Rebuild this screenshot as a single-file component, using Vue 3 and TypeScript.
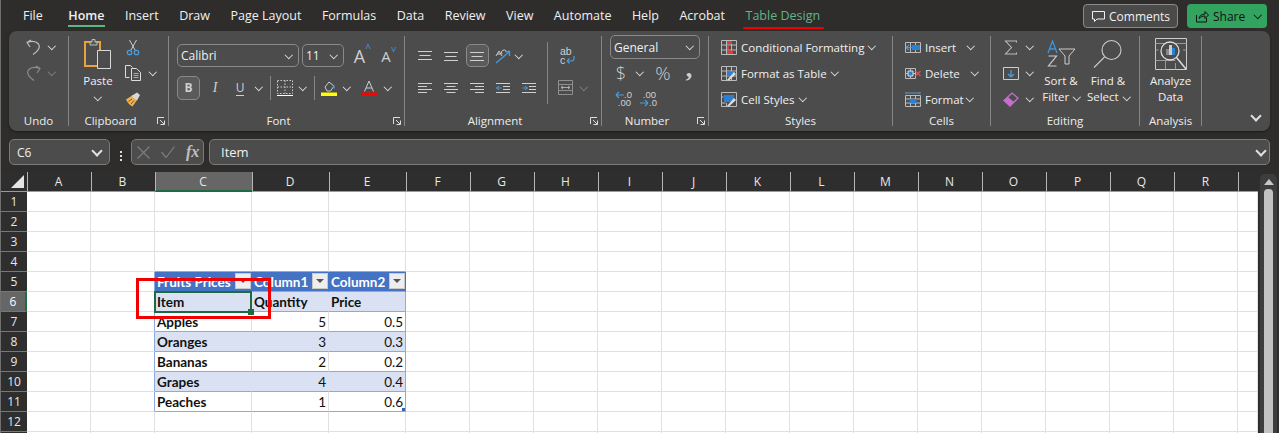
<script setup lang="ts">
interface Tab {
  name: string
  cls?: string
}

const tabs: Tab[] = [
  { name: 'File' },
  { name: 'Home', cls: 'home' },
  { name: 'Insert' },
  { name: 'Draw' },
  { name: 'Page Layout' },
  { name: 'Formulas' },
  { name: 'Data' },
  { name: 'Review' },
  { name: 'View' },
  { name: 'Automate' },
  { name: 'Help' },
  { name: 'Acrobat' },
  { name: 'Table Design', cls: 'design' }
]

const columns = ['A', 'B', 'C', 'D', 'E', 'F', 'G', 'H', 'I', 'J', 'K', 'L', 'M', 'N', 'O', 'P', 'Q', 'R', '']
const rows = [1, 2, 3, 4, 5, 6, 7, 8, 9, 10, 11, 12, 13]

const table: Record<number, (string | number)[]> = {
  5: ['Fruits Prices', 'Column1', 'Column2'],
  6: ['Item', 'Quantity', 'Price'],
  7: ['Apples', 5, 0.5],
  8: ['Oranges', 3, 0.3],
  9: ['Bananas', 2, 0.2],
  10: ['Grapes', 4, 0.4],
  11: ['Peaches', 1, 0.6]
}

const tableCols = ['C', 'D', 'E']

function value(r: number, col: string) {
  const i = tableCols.indexOf(col)
  if (i < 0 || !table[r]) return ''
  return table[r][i]
}

function cellClass(r: number, col: string) {
  const inTable = tableCols.includes(col)
  return {
    'in-table': inTable && r >= 5 && r <= 11,
    'table-top': inTable && r === 4,
    'table-left': col === 'B' && r >= 5 && r <= 11,
    'table-right': col === 'E' && r >= 5 && r <= 11,
    head: inTable && r === 5,
    band: inTable && (r === 6 || r === 8 || r === 10),
    bold: col === 'C' || r === 6,
    num: typeof value(r, col) === 'number'
  }
}
</script>

<template>
  <div class="excel">
    <div class="tabbar">
      <div class="tabs">
        <span v-for="t in tabs" :key="t.name" class="tab" :class="t.cls">{{ t.name }}</span>
      </div>
      <div class="top-actions">
        <div class="comments">
          <svg width="13" height="14" viewBox="0 0 13 14" fill="none" stroke="#eee" stroke-width="1"><path d="M.5 2.500h12v7.500H5L2.500 12.500V10h-2z"/></svg>
          Comments
        </div>
        <div class="share">
          <svg width="14" height="14" viewBox="0 0 14 14" fill="none" stroke="#111" stroke-width="1"><path d="M1.500 6v7h10V9M4 9.500c.5-3 3-4.500 6-4.500V2.500l3.500 3.500L10 9.500V7C7.500 7 5.500 7.800 4 9.500z"/></svg>
          <span>Share</span>
          <i class="chev dark"></i>
        </div>
      </div>
    </div>

    <div class="ribbon">
      <!-- Undo -->
      <div class="group g-undo">
        <div class="body col">
          <div class="tool">
            <svg width="15" height="17" viewBox="0 0 15 17" fill="none" stroke="#bdbdbd" stroke-width="1.200"><path d="M5 1 1 3.500 4 8M1 3.500C5 2 10 2 12.500 5 14.500 8 12 12 7 15.500"/></svg>
            <i class="chev small-gap"></i>
          </div>
          <div class="tool">
            <svg width="15" height="17" viewBox="0 0 15 17" fill="none" stroke="#8c8c8c" stroke-width="1.200"><path d="M10 1l4 2.500L11 8M14 3.500C10 2 5 2 2.500 5 .5 8 3 12 8 15.500"/></svg>
            <i class="chev small-gap off"></i>
          </div>
        </div>
        <div class="label">Undo</div>
      </div>
      <div class="sep"></div>

      <!-- Clipboard -->
      <div class="group g-clip">
        <div class="body row">
          <div class="large paste">
            <div class="large-icon">
              <svg width="28" height="31" viewBox="0 0 28 31"><path d="M1 4h15v24H1z" fill="none" stroke="#e8a33c" stroke-width="2"/><path d="M6 7V4h2V1.500h3V4h2v3z" fill="#555" stroke="#bbb"/><path d="M13.500 12.500h13v18h-13z" fill="#4c4c4c" stroke="#d8d8d8"/></svg>
            </div>
            <span>Paste</span>
            <i class="chev stacked"></i>
          </div>
          <div class="col clip-small">
            <div class="tool">
              <svg width="16" height="17" viewBox="0 0 16 17" fill="none"><path d="M4.500 1 10 11M11.500 1 6 11" stroke="#ccc"/><circle cx="4.500" cy="13.500" r="2.200" stroke="#4a9bdc" stroke-width="1.300"/><circle cx="11.500" cy="13.500" r="2.200" stroke="#4a9bdc" stroke-width="1.300"/></svg>
            </div>
            <div class="tool">
              <svg width="17" height="16" viewBox="0 0 17 16" fill="none" stroke="#ddd"><path d="M4.500 12.500H.5v-12h5l2 2"/><path d="M6.500 3.500h5l4 4v8h-9z" fill="#4c4c4c"/><path d="M8.500 8.500h5M8.500 10.500h5M8.500 12.500h5" stroke="#aaa"/></svg>
              <i class="chev small-gap"></i>
            </div>
            <div class="tool">
              <svg width="17" height="16" viewBox="0 0 17 16"><path d="M1 8.500 8 4l4 5-4.500 6.500C5.500 14.500 2.500 12 1 8.500z" fill="#f0b050"/><path d="M6.500 5 12 1.500l3 2.500-3 5.500z" fill="#d8d8d8"/><path d="M3.500 10.500 7 8M6 13l3-3.500" stroke="#7a5b2b"/></svg>
            </div>
          </div>
        </div>
        <div class="label launch-pad">Clipboard
          <svg class="launcher" width="8" height="8" viewBox="0 0 8 8" fill="none" stroke="#ddd"><path d="M.5 7V.5H7M3 3l4 4M3.500 7.500h4v-4"/></svg>
        </div>
      </div>
      <div class="sep"></div>

      <!-- Font -->
      <div class="group g-font">
        <div class="body stack">
          <div class="font-top">
            <div class="select"><span>Calibri</span><i class="chev"></i></div>
            <div class="select"><span>11</span><i class="chev"></i></div>
            <span class="grow-a big">A<sup class="caret">^</sup></span>
            <span class="grow-a">A<sup class="caret flip">^</sup></span>
          </div>
          <div class="font-bottom">
            <div class="bold-btn">B</div>
            <span class="italic">I</span>
            <span class="under">U</span>
            <i class="chev"></i>
            <div class="vline"></div>
            <svg width="16" height="16" viewBox="0 0 16 16" fill="none" stroke="#ccc"><path d="M.5.500h15v13H.5z" stroke-dasharray="1.500 1.500"/><path d="M8 .5v13M.5 7h15" stroke-dasharray="1.500 1.500"/><path d="M0 15.500h16" stroke="#fff"/></svg>
            <i class="chev"></i>
            <div class="vline"></div>
            <svg width="16" height="16" viewBox="0 0 16 16" fill="none"><path d="M4 7 8 2l5 4-3.500 5H6z" stroke="#ccc"/><path d="M10.500 8 13 5l1 3.500z" fill="#4a9bdc"/><path d="M0 12.500h16v3.500H0z" fill="#ff0"/></svg>
            <i class="chev"></i>
            <svg width="16" height="16" viewBox="0 0 16 16"><path d="M3.500 11.500 8 1l4.500 10.500M5 8h6" fill="none" stroke="#ccc"/><path d="M0 12.500h16v3.500H0z" fill="#f00"/></svg>
            <i class="chev"></i>
          </div>
        </div>
        <div class="label launch-pad">Font
          <svg class="launcher" width="8" height="8" viewBox="0 0 8 8" fill="none" stroke="#ddd"><path d="M.5 7V.5H7M3 3l4 4M3.500 7.500h4v-4"/></svg>
        </div>
      </div>
      <div class="sep"></div>

      <!-- Alignment -->
      <div class="group g-align">
        <div class="body align-body">
          <div class="align-main">
            <svg class="lines" viewBox="0 0 14 10"><path d="M0 .5h14M1.500 4.500h11M0 8.500h14"/></svg>
            <svg class="lines" viewBox="0 0 14 10"><path d="M0 1.500h14M1.500 5.500h11M0 9.500h14"/></svg>
            <div class="pressed"><svg class="lines" viewBox="0 0 14 10"><path d="M0 1.500h14M1.500 5.500h11M0 9.500h14"/></svg></div>
            <svg width="16" height="16" viewBox="0 0 16 16" fill="none" stroke="#ccc"><path d="M1 8l3-5 3 5M2 6h4" /><path d="M7 6a2 2 0 0 1 4-3"/><path d="M1 15 14 4" stroke="#4a9bdc" stroke-width="1.300"/><path d="M10 3.500h4.500V8" stroke="#4a9bdc" stroke-width="1.300"/></svg>
            <i class="chev start"></i>

            <svg class="lines" viewBox="0 0 14 10"><path d="M0 .5h14M0 3.500h9M0 6.500h14M0 9.500h9"/></svg>
            <svg class="lines" viewBox="0 0 14 10"><path d="M0 .5h14M2.500 3.500h9M0 6.500h14M2.500 9.500h9"/></svg>
            <svg class="lines" viewBox="0 0 14 10"><path d="M0 .5h14M5 3.500h9M0 6.500h14M5 9.500h9"/></svg>
            <svg class="lines" viewBox="0 0 14 10"><path d="M0 .5h14M7 3.500h7M7 6.500h7M0 9.500h14"/><path d="M.5 5h5M.5 5 3 3M.5 5 3 7" stroke="#4a9bdc"/></svg>
            <svg class="lines" viewBox="0 0 14 10"><path d="M0 .5h14M7 3.500h7M7 6.500h7M0 9.500h14"/><path d="M5.500 5H.5M5.500 5 3 3M5.500 5 3 7" stroke="#4a9bdc"/></svg>
          </div>
          <div class="vline tall"></div>
          <div class="align-side">
            <div class="wrap-icon">
              <span>ab</span>
              <span class="wrap-c">c<svg width="9" height="8" viewBox="0 0 9 8" fill="none" stroke="#4a9bdc" stroke-width="1.200"><path d="M8 0v2.500A2.500 2.500 0 0 1 5.500 5H1M1 5l2.500-2.500M1 5l2.500 2.500"/></svg></span>
            </div>
            <div class="merge">
              <svg width="15" height="15" viewBox="0 0 15 15" fill="none" stroke="#8f8f8f"><path d="M.5.500h14v14H.5zM.5 4.500h14M.5 10.500h14"/><path d="M3 7.500h9M3 7.500 5 6M3 7.500 5 9M12 7.500 10 6M12 7.500 10 9" stroke="#aaa"/></svg>
              <i class="chev off"></i>
            </div>
          </div>
        </div>
        <div class="label launch-pad">Alignment
          <svg class="launcher" width="8" height="8" viewBox="0 0 8 8" fill="none" stroke="#ddd"><path d="M.5 7V.5H7M3 3l4 4M3.500 7.500h4v-4"/></svg>
        </div>
      </div>
      <div class="sep"></div>

      <!-- Number -->
      <div class="group g-number">
        <div class="body col">
          <div class="tool">
            <div class="select general"><span>General</span><i class="chev"></i></div>
          </div>
          <div class="tool num-row">
            <span class="symbol">$</span>
            <i class="chev"></i>
            <span class="symbol pct">%</span>
            <span class="symbol comma">,</span>
          </div>
          <div class="tool dec-row">
            <div class="dec less">
              <svg width="9" height="8" viewBox="0 0 9 8" fill="none" stroke="#4a9bdc" stroke-width="1.200"><path d="M9 4H1M1 4l3-3M1 4l3 3"/></svg>
              <span>.0</span>
              <span class="wide">.00</span>
            </div>
            <div class="dec more">
              <span class="wide">.00</span>
              <svg width="9" height="8" viewBox="0 0 9 8" fill="none" stroke="#4a9bdc" stroke-width="1.200"><path d="M0 4h8M8 4 5 1M8 4 5 7"/></svg>
              <span>.0</span>
            </div>
          </div>
        </div>
        <div class="label launch-pad">Number
          <svg class="launcher" width="8" height="8" viewBox="0 0 8 8" fill="none" stroke="#ddd"><path d="M.5 7V.5H7M3 3l4 4M3.500 7.500h4v-4"/></svg>
        </div>
      </div>
      <div class="sep"></div>

      <!-- Styles -->
      <div class="group g-styles">
        <div class="body col">
          <div class="tool line-tool">
            <svg width="16" height="15" viewBox="0 0 16 15" fill="none" stroke="#bbb"><path d="M.5.500h15v14H.5zM.5 5h15M.5 10h15M5.500.500v14M10.500.500v14"/><path d="M6 1h5v3H6zM6 10.500h6v3.500H6z" fill="#e23b3b" stroke="none"/><path d="M6 5.500h2v4H6z" fill="#e23b3b" stroke="none"/></svg>
            <span>Conditional Formatting</span><i class="chev"></i>
          </div>
          <div class="tool line-tool">
            <svg width="16" height="15" viewBox="0 0 16 15" fill="none" stroke="#bbb"><path d="M.5.500h15v14H.5zM.5 5h15M.5 10h15M5.500.500v14M10.500.500v14"/><path d="M6 5.500h8V10H6z" fill="#2b7fd4" stroke="none"/><path d="M6 14 13 6l2 2-7 6.500z" fill="#ddd" stroke="none"/></svg>
            <span>Format as Table</span><i class="chev"></i>
          </div>
          <div class="tool line-tool">
            <svg width="16" height="15" viewBox="0 0 16 15" fill="none" stroke="#bbb"><path d="M.5.500h15v14H.5z"/><path d="M3 3h10v7H3z" fill="#2b7fd4" stroke="none"/><path d="M.5 11h4M.5 5h2M5.500 11v3.500" /><path d="M6 14 13 6l2 2-7 6.500z" fill="#ddd" stroke="none"/></svg>
            <span>Cell Styles</span><i class="chev"></i>
          </div>
        </div>
        <div class="label">Styles</div>
      </div>
      <div class="sep"></div>

      <!-- Cells -->
      <div class="group g-cells">
        <div class="body col">
          <div class="tool line-tool">
            <svg width="16" height="15" viewBox="0 0 16 15" fill="none" stroke="#bbb"><path d="M.5 2.500h15v10H.5zM5.500 2.500v10M10.500 2.500v10M.5 7.500h15"/><path d="M7 5h8v5H7z" fill="#2b7fd4" stroke="none"/><path d="M7 7.500H1M1 7.500l3-2.500M1 7.500 4 10" stroke="#4a9bdc" stroke-width="1.200"/></svg>
            <span>Insert</span><i class="chev far"></i>
          </div>
          <div class="tool line-tool">
            <svg width="16" height="15" viewBox="0 0 16 15" fill="none" stroke="#bbb"><path d="M.5 2.500h10v10H.5zM5.500 2.500v10M.5 7.500h10"/><path d="M3 5h5v5H3z" fill="#2b7fd4" stroke="#ddd"/><path d="M10.500 5l5 5M15.500 5l-5 5" stroke="#e25050" stroke-width="1.200"/></svg>
            <span>Delete</span><i class="chev far"></i>
          </div>
          <div class="tool line-tool">
            <svg width="16" height="15" viewBox="0 0 16 15" fill="none" stroke="#bbb"><path d="M.5 3.500h15v11H.5zM5.500 3.500v11M10.500 3.500v11M.5 7h15M.5 11h15"/><path d="M4.500 7h7v4h-7z" fill="#2b7fd4" stroke="none"/><path d="M1 1h14M1 0v2M15 0v2" stroke="#4a9bdc"/></svg>
            <span>Format</span><i class="chev near"></i>
          </div>
        </div>
        <div class="label">Cells</div>
      </div>
      <div class="sep"></div>

      <!-- Editing -->
      <div class="group g-edit">
        <div class="body row">
          <div class="col edit-small">
            <div class="tool">
              <svg width="16" height="15" viewBox="0 0 16 15" fill="none" stroke="#bbb" stroke-width="1.100"><path d="M13.500 2.500V1h-11l6 6.500-6 6.500h11v-1.500"/></svg>
              <i class="chev small-gap"></i>
            </div>
            <div class="tool">
              <svg width="16" height="15" viewBox="0 0 16 15" fill="none" stroke="#ccc"><path d="M.5 1.500h15v12H.5z"/><path d="M8 4v7M8 11 5 8M8 11l3-3" stroke="#4a9bdc" stroke-width="1.300"/></svg>
              <i class="chev small-gap"></i>
            </div>
            <div class="tool">
              <svg width="16" height="15" viewBox="0 0 16 15"><path d="M1 8.500 9 1l6 5-8 8z" fill="none" stroke="#c86dd0" stroke-width="1.300"/><path d="M1 8.500 5 5l6 5-4 4z" fill="#c86dd0"/></svg>
              <i class="chev small-gap"></i>
            </div>
          </div>
          <div class="large sort">
            <div class="large-icon">
              <svg width="29" height="27" viewBox="0 0 29 27" fill="none"><path d="M1 13 5.500 1 10 13M2.500 9h6" stroke="#3f93d8" stroke-width="1.300"/><path d="M1.500 16h8L1.500 26h8" stroke="#ccc" stroke-width="1.200"/><path d="M12 9h16l-6 7v8h-4v-8z" stroke="#ccc"/></svg>
            </div>
            <span>Sort &amp;</span>
            <span>Filter<i class="chev inline"></i></span>
          </div>
          <div class="large find">
            <div class="large-icon">
              <svg width="30" height="29" viewBox="0 0 30 29" fill="none" stroke="#ccc" stroke-width="1.100"><circle cx="18.500" cy="11" r="9.500"/><path d="M11.500 18 1 28.500"/></svg>
            </div>
            <span>Find &amp;</span>
            <span>Select<i class="chev inline"></i></span>
          </div>
        </div>
        <div class="label">Editing</div>
      </div>
      <div class="sep"></div>

      <!-- Analysis -->
      <div class="group g-analysis">
        <div class="body">
          <div class="large">
            <div class="large-icon">
              <svg width="32" height="32" viewBox="0 0 32 32" fill="none" stroke="#bbb"><path d="M.5.500h31v31H.5z" stroke="#ccc"/><path d="M.5 5.500h31M.5 22.500h20M10.500 22.500v9M20.500 25v6.500M.5 12h3M28 12h3.500" stroke="#999"/><circle cx="15" cy="13" r="9" stroke="#ddd" stroke-width="1.300" fill="#4c4c4c"/><path d="M21.500 19.500 31 31" stroke="#ddd" stroke-width="1.500"/><path d="M11 11h3v6h-3z" fill="#888" stroke="none"/><path d="M14 7h3v10h-3z" fill="#ccc" stroke="none"/><path d="M17 10h3v7h-3z" fill="#2b7fd4" stroke="none"/></svg>
            </div>
            <span>Analyze</span>
            <span>Data</span>
          </div>
        </div>
        <div class="label">Analysis</div>
      </div>
      <div class="sep"></div>

      <div class="collapse"><i class="chev big-chev"></i></div>
    </div>

    <div class="formula-bar">
      <div class="name-box"><span>C6</span><i class="chev big-chev"></i></div>
      <div class="dots"><b></b><b></b><b></b></div>
      <div class="fx-box">
        <svg width="13" height="13" viewBox="0 0 13 13" fill="none" stroke="#7d7d7d" stroke-width="1.200"><path d="M.5.500l12 12M12.500.500l-12 12"/></svg>
        <svg width="14" height="12" viewBox="0 0 14 12" fill="none" stroke="#7d7d7d" stroke-width="1.200"><path d="M.5 6l4.500 5.500L13.500.500"/></svg>
        <span class="fx">fx</span>
      </div>
      <div class="formula"><span>Item</span><i class="chev big-chev"></i></div>
    </div>

    <div class="sheet">
      <div class="grid">
        <div class="corner"><svg width="13" height="13" viewBox="0 0 13 13"><path d="M13 0v13H0z" fill="#e4e4e4"/></svg></div>
        <div v-for="c in columns" :key="c" class="col-head" :class="{ active: c === 'C' }">{{ c }}</div>
        <template v-for="r in rows" :key="r">
          <div class="row-head" :class="{ active: r === 6 }">{{ r < 13 ? r : '' }}</div>
          <div v-for="c in columns" :key="c" class="cell" :class="cellClass(r, c)">
            <span class="cell-text">{{ value(r, c) }}</span>
            <span v-if="r === 5 && c !== '' && tableCols.includes(c)" class="filter"><i></i></span>
            <span v-if="r === 6 && c === 'C'" class="selection"><i></i></span>
            <span v-if="r === 11 && c === 'E'" class="resize"></span>
          </div>
        </template>
      </div>
      <div class="vscroll">
        <div class="track">
          <i class="arrow"></i>
          <div class="thumb"></div>
        </div>
      </div>
      <div class="annotation"></div>
    </div>
  </div>
</template>

<style scoped>
.excel {
  width: 1279px;
  height: 433px;
  box-sizing: border-box;
  border-left: 1px solid #6f6f6f;
  overflow: hidden;
  background: #2e2d2c;
  color: #f0f0f0;
  font-family: "Open Sans", "Noto Sans", sans-serif;
  font-size: 12px;
}

/* top tabs */
.tabbar {
  height: 31px;
  display: flex;
  align-items: flex-start;
}
.tabs {
  display: flex;
  gap: 20.500px;
  padding-left: 22px;
  line-height: 31px;
  font-size: 12.500px;
}
.tab {
  position: relative;
  white-space: nowrap;
}
.tab.home {
  margin-left: 5px;
  font-weight: 600;
}
.tab.home::after {
  content: "";
  position: absolute;
  left: 0;
  right: -1px;
  top: 25px;
  height: 2px;
  background: #5fb585;
}
.tab.design {
  color: #5fb585;
}
.tab.design::after {
  content: "";
  position: absolute;
  left: -3px;
  right: -4px;
  top: 27px;
  height: 2px;
  border-radius: 1px;
  background: #f00000;
}
.top-actions {
  margin-left: auto;
  margin-right: 12px;
  padding-top: 4px;
  display: flex;
  gap: 9px;
}
.comments,
.share {
  height: 24px;
  box-sizing: border-box;
  display: flex;
  align-items: center;
  gap: 4px;
  border-radius: 4px;
}
.comments {
  width: 95px;
  padding-left: 8px;
  background: #4a4a4a;
  border: 1px solid #8a8a8a;
}
.share {
  width: 80px;
  padding-left: 8px;
  color: #111;
  background: #33a45f;
}
.share span {
  color: #111;
  width: 38px;
}

/* ribbon */
.ribbon {
  margin-left: 8px;
  width: 1261px;
  height: 100px;
  box-sizing: border-box;
  padding-top: 3px;
  display: flex;
  align-items: stretch;
  background: #4c4c4c;
  border-radius: 8px;
  box-shadow: 0 1px 2px #1c1c1c;
  font-size: 11.500px;
}
.sep {
  flex: 0 0 1px;
  height: 90px;
  margin-top: 2px;
  background: #858585;
}
.group {
  display: flex;
  flex-direction: column;
}
.body {
  height: 78px;
  box-sizing: border-box;
}
.label {
  position: relative;
  height: 18px;
  line-height: 18px;
  text-align: center;
  color: #ececec;
  font-size: 11.500px;
}
.launch-pad {
  padding-right: 16px;
}
.launcher {
  position: absolute;
  right: 3px;
  top: 5px;
}
.g-undo { width: 59px; }
.g-clip { width: 99px; }
.g-font { width: 235px; }
.g-align { width: 196px; }
.g-number { width: 106px; }
.g-styles { width: 183px; }
.g-cells { width: 97px; }
.g-edit { width: 148px; }
.g-analysis { width: 61px; }

.row {
  display: flex;
}
.col {
  display: flex;
  flex-direction: column;
}
.tool {
  height: 26px;
  display: flex;
  align-items: center;
  white-space: nowrap;
}
.chev {
  display: inline-block;
  flex: none;
  width: 4.500px;
  height: 4.500px;
  margin-top: -2px;
  border-right: 1.300px solid #e0e0e0;
  border-bottom: 1.300px solid #e0e0e0;
  transform: rotate(45deg);
}
.chev.off {
  border-color: #808080;
}
.chev.dark {
  border-color: #111;
}
.chev.small-gap {
  margin-left: 8px;
}
.chev.start {
  justify-self: start;
  margin-left: 0;
}
.chev.inline {
  margin-left: 5px;
  vertical-align: 2px;
}
.chev.big-chev {
  width: 6px;
  height: 6px;
  border-width: 2px;
}

.large {
  display: flex;
  flex-direction: column;
  align-items: center;
  line-height: 16px;
  white-space: nowrap;
}
.large-icon {
  height: 39px;
  display: flex;
  align-items: center;
  justify-content: center;
}

.g-undo .body { padding-left: 17px; }

.paste {
  width: 58px;
}
.clip-small {
  margin-left: -2px;
}
.chev.stacked {
  margin-top: 5px;
}

.g-font .body {
  padding: 10px 0 0 8px;
}
.font-top {
  display: grid;
  grid-template-columns: 122px 42px 25px 22px;
  column-gap: 3px;
  height: 23px;
  align-items: center;
  justify-items: center;
}
.select {
  box-sizing: border-box;
  width: 100%;
  height: 23px;
  display: flex;
  align-items: center;
  justify-content: space-between;
  padding: 0 7px 0 3px;
  border: 1px solid #8a8a8a;
  border-radius: 5px;
  font-size: 12px;
}
.grow-a {
  position: relative;
  font-size: 15px;
  line-height: 20px;
  color: #cfcfcf;
}
.grow-a.big {
  font-size: 18px;
}
.caret {
  position: absolute;
  left: 100%;
  top: -4px;
  font-size: 10px;
  line-height: 12px;
  color: #4a9bdc;
}
.caret.flip {
  transform: scaleY(-1);
}
.font-bottom {
  margin-top: 9px;
  display: grid;
  grid-template-columns: 23px 30px 20px 18px 4px 25px 12px 10px 20px 16px 28px 10px;
  height: 24px;
  align-items: center;
  justify-items: center;
}
.bold-btn {
  box-sizing: border-box;
  width: 23px;
  height: 24px;
  border: 1px solid #8a8a8a;
  border-radius: 5px;
  text-align: center;
  line-height: 22px;
  font-weight: 700;
  font-size: 12px;
  color: #cfcfcf;
  background: #5a5a5a;
}
.italic {
  font-family: "Liberation Serif", serif;
  font-style: italic;
  font-size: 14px;
  color: #cfcfcf;
}
.under {
  font-size: 12px;
  line-height: 14px;
  color: #cfcfcf;
  border-bottom: 1px solid #cfcfcf;
}
.vline {
  width: 1px;
  height: 24px;
  background: #858585;
}

.align-body {
  display: flex;
  padding: 10px 0 0 7px;
}
.align-main {
  display: grid;
  grid-template-columns: repeat(5, 26px);
  grid-auto-rows: 23px;
  row-gap: 9px;
  align-items: center;
  justify-items: center;
}
.lines {
  width: 14px;
  height: 10px;
  fill: none;
  stroke: #d0d0d0;
}
.pressed {
  box-sizing: border-box;
  width: 23px;
  height: 23px;
  display: flex;
  align-items: center;
  justify-content: center;
  border: 1px solid #8a8a8a;
  border-radius: 5px;
  background: #5a5a5a;
}
.vline.tall {
  height: 62px;
  margin: -2px 0 0 5px;
}
.align-side {
  padding-left: 10px;
  display: flex;
  flex-direction: column;
}
.wrap-icon {
  height: 23px;
  display: flex;
  flex-direction: column;
  align-items: flex-start;
  line-height: 9px;
  padding-left: 2px;
  font-family: "Liberation Sans", sans-serif;
  font-size: 10.500px;
  color: #d0d0d0;
}
.wrap-icon span:first-child {
  margin-top: 3px;
}
.wrap-c svg {
  margin-left: 1px;
}
.merge {
  margin-top: 9px;
  height: 23px;
  display: flex;
  align-items: center;
  gap: 8px;
}

.g-number .body {
  padding-left: 8px;
}
.select.general {
  width: 90px;
  height: 24px;
  padding-left: 3px;
}
.num-row {
  display: grid;
  grid-template-columns: 22px 16px 30px 22px;
  width: 90px;
  justify-items: center;
  align-items: center;
}
.symbol {
  font-size: 18px;
  line-height: 26px;
  font-weight: 300;
  color: #cfcfcf;
}
.symbol.pct {
  font-size: 19px;
}
.symbol.comma {
  font-family: "Liberation Serif", serif;
  font-size: 26px;
  font-weight: 700;
  line-height: 14px;
  margin-top: -8px;
}
.dec-row {
  display: grid;
  grid-template-columns: 26px 24px;
  justify-items: center;
}
.dec {
  width: 16px;
  display: grid;
  grid-template-columns: 9px 7px;
  grid-template-rows: 8px 8px;
  font-family: "Liberation Sans", sans-serif;
  font-size: 9.500px;
  line-height: 8px;
  color: #d0d0d0;
  align-items: center;
  white-space: nowrap;
}
.dec .wide {
  grid-column: 1 / 3;
  justify-self: end;
}

.line-tool {
  gap: 4px;
}
.line-tool .chev {
  margin-left: 1px;
}
.line-tool .chev.far {
  margin-left: 8px;
}
.line-tool .chev.near {
  margin-left: -1px;
}
.g-styles .body,
.g-cells .body {
  padding-left: 12px;
}

.edit-small {
  width: 45px;
  box-sizing: border-box;
  padding-left: 12px;
}
.sort {
  width: 50px;
}
.find {
  width: 44px;
}

.collapse {
  flex: 1;
  display: flex;
  justify-content: flex-end;
  padding: 80px 10px 0 0;
}

/* formula bar */
.formula-bar {
  height: 41px;
  box-sizing: border-box;
  padding: 8px 0 0 8px;
  display: flex;
}
.name-box,
.fx-box,
.formula {
  height: 26px;
  box-sizing: border-box;
  border: 1px solid #7a7a7a;
  border-radius: 5px;
  background: #4c4c4c;
  display: flex;
  align-items: center;
}
.name-box {
  width: 101px;
  padding: 0 8px 0 7px;
  justify-content: space-between;
}
.dots {
  width: 21px;
  display: flex;
  flex-direction: column;
  align-items: center;
  justify-content: center;
  gap: 2px;
}
.dots b {
  width: 2px;
  height: 2px;
  background: #ddd;
}
.fx-box {
  width: 73px;
  padding-left: 5px;
  gap: 11px;
}
.fx {
  font-family: "Liberation Serif", serif;
  font-style: italic;
  font-weight: 700;
  font-size: 16px;
  color: #c0c0c0;
}
.formula {
  width: 1061px;
  margin-left: 5px;
  padding: 0 4px 0 11px;
  justify-content: space-between;
  font-size: 13px;
}

/* sheet */
.sheet {
  position: relative;
  display: flex;
  height: 261px;
}
.grid {
  display: grid;
  grid-template-columns: 26px 64px 64px 97px 77px 77px repeat(13, 64px) 20px;
  grid-auto-rows: 20px;
  background: #fff;
  overflow: hidden;
}
.corner {
  background: #2e2e2e;
  border-bottom: 1px solid #9a9a9a;
  display: flex;
  align-items: flex-end;
  justify-content: flex-end;
  padding: 0 3px 3px 0;
  box-sizing: border-box;
}
.col-head {
  box-sizing: border-box;
  background: #2e2e2e;
  border-left: 1px solid #b5b5b5;
  border-bottom: 1px solid #9a9a9a;
  padding-right: 2px;
  text-align: center;
  line-height: 19px;
  font-size: 12px;
  color: #e8e8e8;
}
.col-head.active {
  background: #666;
  border-bottom: 2px solid #1d6b41;
}
.row-head {
  box-sizing: border-box;
  background: #2e2e2e;
  border-bottom: 1px solid #777;
  text-align: center;
  line-height: 19px;
  font-size: 12px;
  color: #e8e8e8;
}
.row-head.active {
  background: #666;
  border-right: 2px solid #1d6b41;
  color: #fff;
}
.cell {
  position: relative;
  box-sizing: border-box;
  display: flex;
  align-items: center;
  padding: 0 2px;
  background: #fff;
  border-right: 1px solid #e0e0e0;
  border-bottom: 1px solid #e0e0e0;
  font-family: Lato, "Liberation Sans", sans-serif;
  font-size: 13.500px;
  color: #111;
  white-space: nowrap;
}
.cell.num {
  justify-content: flex-end;
}
.cell.bold .cell-text {
  font-weight: 700;
}
.cell.in-table,
.cell.table-top {
  border-bottom-color: #8ea9db;
}
.cell.table-left,
.cell.table-right {
  border-right-color: #8ea9db;
}
.cell.band {
  background: #d9e1f2;
  border-right-color: #d9e1f2;
}
.cell.band.table-right {
  border-right-color: #8ea9db;
}
.cell.head {
  background: #4472c4;
  border-right-color: #4472c4;
  border-bottom-color: #8ea9db;
  color: #fff;
  justify-content: space-between;
}
.cell.head .cell-text {
  font-weight: 700;
}
.filter {
  position: absolute;
  right: 0;
  top: 1px;
  width: 16px;
  height: 16px;
  box-sizing: border-box;
  border: 1px solid #c8c8c8;
  background: #eeeeee;
  display: flex;
  align-items: center;
  justify-content: center;
}
.filter i {
  border-left: 4px solid transparent;
  border-right: 4px solid transparent;
  border-top: 4px solid #555;
}
.selection {
  position: absolute;
  z-index: 2;
  left: -1px;
  top: -1px;
  width: 98px;
  height: 22px;
  box-sizing: border-box;
  border: 2px solid #1e6b41;
}
.selection i {
  position: absolute;
  right: -4px;
  bottom: -4px;
  width: 6px;
  height: 6px;
  box-sizing: border-box;
  background: #1e6b41;
}
.resize {
  position: absolute;
  right: 0;
  bottom: 0;
  width: 3px;
  height: 3px;
  background: #3a5fb0;
}
.vscroll {
  flex: 1;
  background: #2e2e2e;
  padding: 2px 2px 0 2px;
}
.track {
  height: 100%;
  border-radius: 5px 5px 0 0;
  background: #3d3d3d;
  display: flex;
  flex-direction: column;
  align-items: center;
  padding-top: 5px;
  box-sizing: border-box;
}
.arrow {
  border-left: 5px solid transparent;
  border-right: 5px solid transparent;
  border-bottom: 6px solid #c8c8c8;
}
.thumb {
  flex: 1;
  width: 9px;
  margin-top: 4px;
  border-radius: 4px 4px 0 0;
  background: #c2c2c2;
}
.annotation {
  position: absolute;
  z-index: 3;
  left: 135px;
  top: 106px;
  width: 135px;
  height: 41px;
  box-sizing: border-box;
  border: 3px solid #f00000;
}
</style>

<style>
html,
body {
  margin: 0;
  overflow: hidden;
}
</style>
